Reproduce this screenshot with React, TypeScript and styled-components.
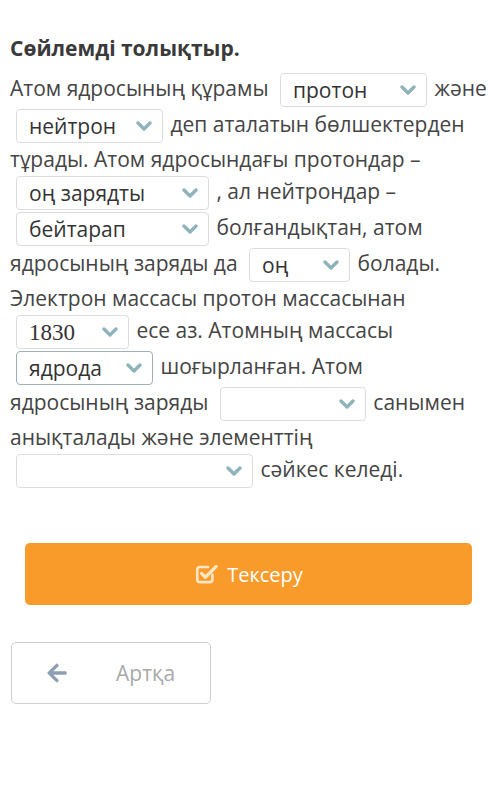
import styled, { createGlobalStyle } from "styled-components";
import { FaArrowLeft } from "react-icons/fa";

const Global = createGlobalStyle`
  body {
    margin: 0;
    background: #fff;
    font-family: "Open Sans", "Noto Sans", sans-serif;
  }
`

const Page = styled.div`
  padding: 34px 4px 0 10px;
`

const Title = styled.h3`
  margin: 0 0 10px 0;
  font-size: 21px;
  font-weight: 700;
  color: #3a3a3a;
`

const Sentence = styled.p`
  margin: 0;
  font-size: 21px;
  line-height: 31px;
  color: #444;
`

const Box = styled.span<{ $w: number; $focus?: boolean; $serif?: boolean }>`
  display: inline-flex;
  align-items: center;
  justify-content: space-between;
  box-sizing: border-box;
  width: ${p => p.$w}px;
  height: 34px;
  margin: 1px 2px 1px 6px;
  padding: 0 10px 0 12px;
  vertical-align: middle;
  border: 1px solid ${p => (p.$focus ? "#9fb0b8" : "#dcdcdc")};
  border-radius: 4px;
  background: #fff;
  color: #333;
  font-family: ${p => (p.$serif ? '"Liberation Serif", serif' : 'inherit')};
  font-size: ${p => (p.$serif ? 23 : 21)}px;
  line-height: 1;
`

const Chevron = () => (
  <svg width="16" height="10" viewBox="0 0 16 10">
    <path d="M2 2 L8 8 L14 2" fill="none" stroke="#8fb3bb" strokeWidth="3.4" strokeLinecap="round" strokeLinejoin="round" />
  </svg>
)

const Select = (props: { w: number; value?: string; focus?: boolean; serif?: boolean }) => (
  <Box $w={props.w} $focus={props.focus} $serif={props.serif}>
    <span>{props.value}</span>
    <Chevron />
  </Box>
)

const CheckIcon = () => (
  <svg width="26" height="26" viewBox="0 0 24 24">
    <path d="M17 12.5 V17 a2.5 2.5 0 0 1 -2.5 2.5 H5.5 A2.5 2.5 0 0 1 3 17 V8 A2.5 2.5 0 0 1 5.5 5.5 H13" fill="none" stroke="#fde6c4" strokeWidth="2.4" strokeLinecap="round" />
    <path d="M7 11.5 L10.5 15 L20.5 5" fill="none" stroke="#fde6c4" strokeWidth="3" strokeLinecap="round" strokeLinejoin="round" />
  </svg>
)

const CheckButton = styled.button`
  display: flex;
  align-items: center;
  justify-content: center;
  gap: 7px;
  width: 447px;
  height: 62px;
  margin: 54px 0 0 15px;
  border: none;
  border-radius: 5px;
  background: #f99b2b;
  color: #fff;
  font-family: "Open Sans", sans-serif;
  font-size: 20px;
`

const BackButton = styled.button`
  display: flex;
  align-items: center;
  width: 200px;
  height: 62px;
  margin: 37px 0 0 1px;
  padding: 0 0 0 34px;
  gap: 48px;
  border: 1px solid #cfcfcf;
  border-radius: 5px;
  background: #fff;
  color: #a9a9a9;
  font-family: "Open Sans", sans-serif;
  font-size: 21px;

  svg {
    color: #8d9fb4;
  }
`

export default function App() {
  return (
    <Page>
      <Global />
      <Title>Сөйлемді толықтыр.</Title>
      <Sentence>
        Атом ядросының құрамы <Select w={147} value="протон" /> және{" "}
        <Select w={147} value="нейтрон" /> деп аталатын бөлшектерден тұрады. Атом
        ядросындағы протондар – <Select w={193} value="оң зарядты" /> , ал нейтрондар –{" "}
        <Select w={193} value="бейтарап" /> болғандықтан, атом ядросының заряды да{" "}
        <Select w={101} value="оң" /> болады. Электрон массасы протон массасынан{" "}
        <Select w={113} value="1830" serif /> есе аз. Атомның массасы{" "}
        <Select w={137} value="ядрода" focus /> шоғырланған. Атом ядросының&nbsp;заряды{" "}
        <Select w={146} /> санымен анықталады және элементтің{" "}
        <Select w={237} /> сәйкес келеді.
      </Sentence>
      <CheckButton>
        <CheckIcon />
        Тексеру
      </CheckButton>
      <BackButton>
        <FaArrowLeft size={22} />
        Артқа
      </BackButton>
    </Page>
  );
}
